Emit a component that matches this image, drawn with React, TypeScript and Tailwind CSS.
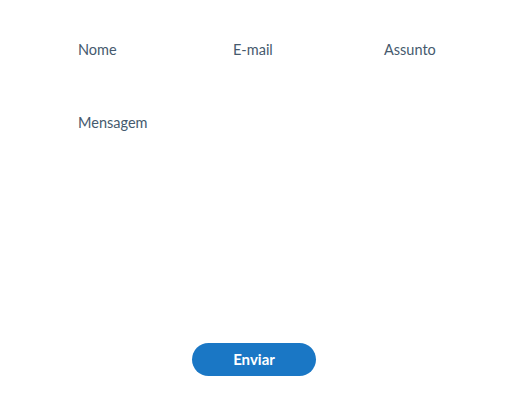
export default function App() {
  return (
    <div className="min-h-[401px] w-[520px] bg-white font-['Lato',sans-serif]">
      <form className="flex flex-col px-[78px] pt-[40px]" onSubmit={(e) => e.preventDefault()}>
        <div className="flex text-[14.5px] leading-[20px] text-[#465a6e]">
          <label className="w-[155px]">Nome</label>
          <label className="w-[151px]">E-mail</label>
          <label>Assunto</label>
        </div>
        <label className="mt-[53px] text-[14.5px] leading-[20px] text-[#465a6e]">Mensagem</label>
        <div className="mt-[210px] flex pl-[114px]">
          <button
            type="submit"
            className="h-[33px] w-[124px] rounded-full bg-[#1a77c5] text-[15px] font-bold text-white"
          >
            Enviar
          </button>
        </div>
      </form>
    </div>
  );
}
